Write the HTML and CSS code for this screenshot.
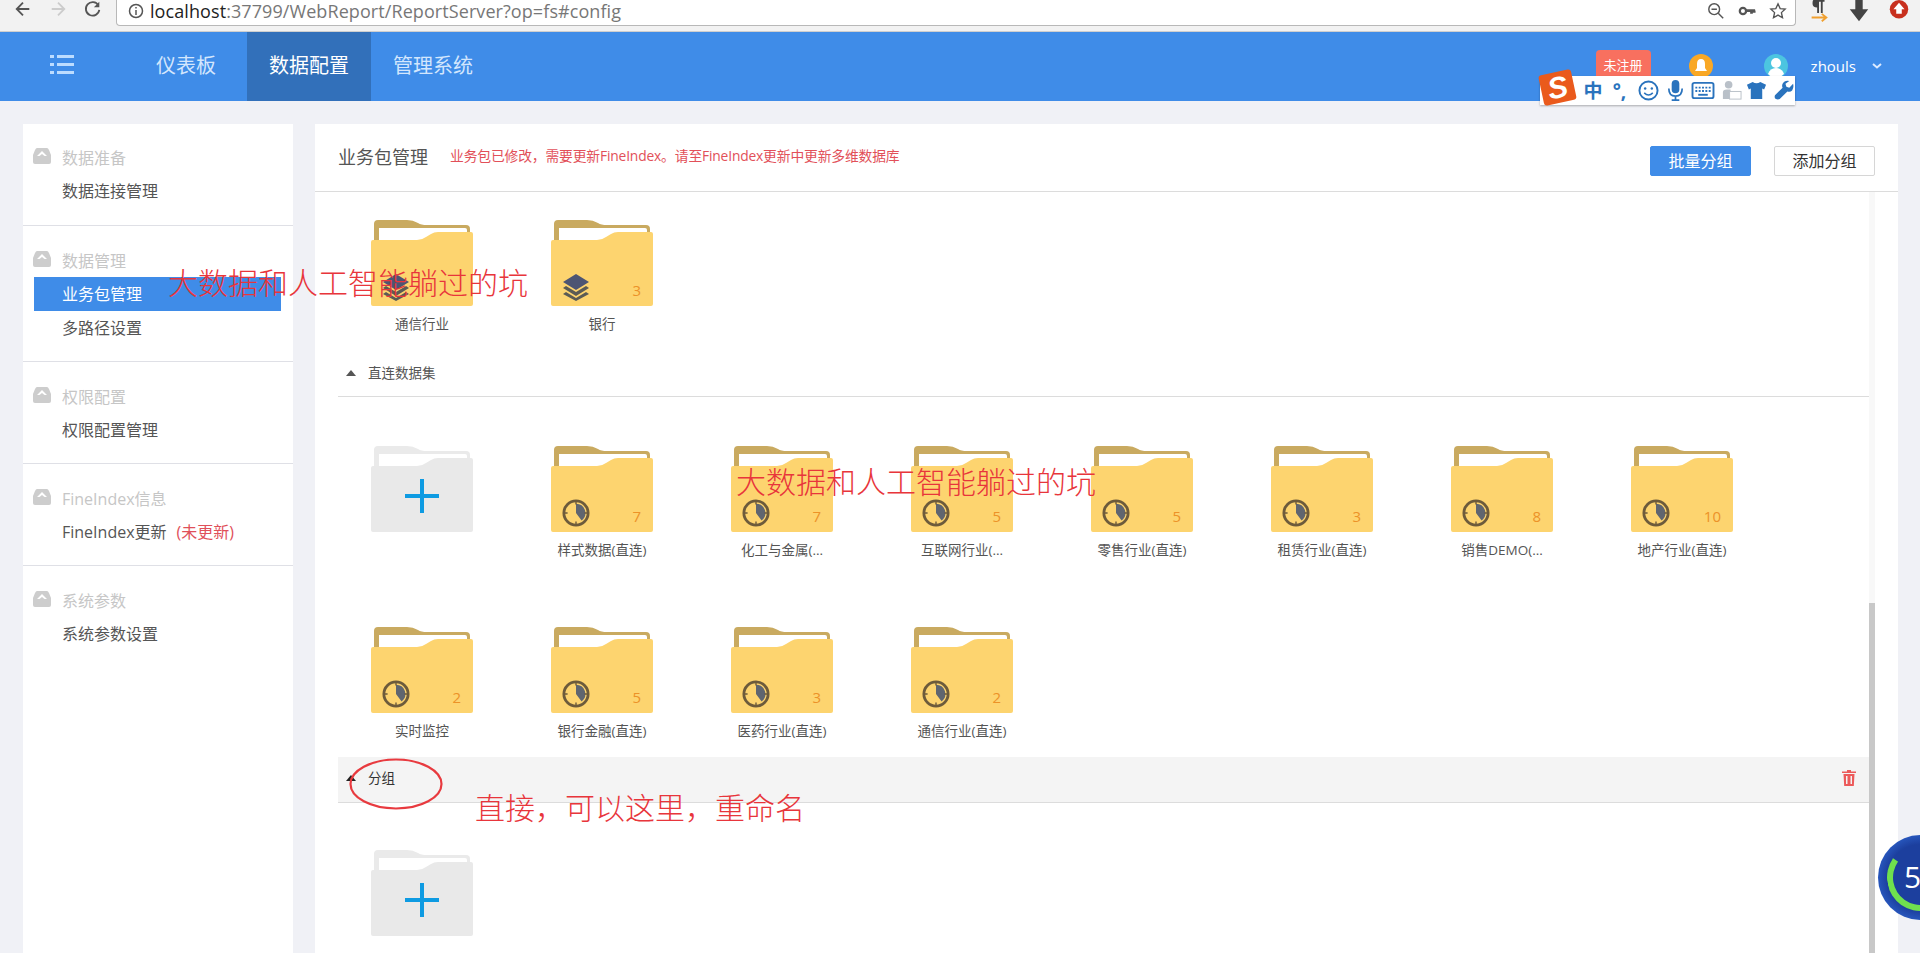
FILE: index.html
```html
<!DOCTYPE html>
<html lang="zh-CN">
<head>
<meta charset="utf-8">
<title>FineBI</title>
<link rel="stylesheet" href="styles.css">
</head>
<body>
<svg class="defs" width="0" height="0" aria-hidden="true">
  <symbol id="folder" viewBox="0 0 102 86">
    <path fill="#c9aa60" d="M3 24V4Q3 0 7 0H36Q42 0 47 3Q50 5 56 5H95Q99 5 99 9V20H3Z"/>
    <path fill="#fff" d="M8 20V8H94Q96 8 96 10V20Z"/>
    <path fill="#fdd46f" d="M2 20H46Q51 20 55 17L60 14Q63 12 67 12H100Q102 12 102 14V84Q102 86 100 86H2Q0 86 0 84V22Q0 20 2 20Z"/>
  </symbol>
  <symbol id="folder-add" viewBox="0 0 102 86">
    <path fill="#eaeaea" d="M3 24V4Q3 0 7 0H36Q42 0 47 3Q50 5 56 5H95Q99 5 99 9V20H3Z"/>
    <path fill="#fff" d="M8 20V8H94Q96 8 96 10V20Z"/>
    <path fill="#e9e9e9" d="M2 20H46Q51 20 55 17L60 14Q63 12 67 12H100Q102 12 102 14V84Q102 86 100 86H2Q0 86 0 84V22Q0 20 2 20Z"/>
    <path fill="#0e9be2" d="M49 33h4v15h15v4H53v15h-4V52H34v-4h15z"/>
  </symbol>
  <symbol id="clock" viewBox="0 0 30 30">
    <circle cx="15" cy="15" r="13" fill="none" stroke="#6d5b3b" stroke-width="3"/>
    <path fill="#5f6570" d="M15 5A10 10 0 0 1 21 23L15 15Z"/>
    <path stroke="#6d5b3b" stroke-width="1.5" d="M15 3v3M15 24v3M3 15h3M24 15h3"/>
  </symbol>
  <symbol id="layers" viewBox="0 0 28 28">
    <path fill="#4d5573" d="M14 1L27 9L14 17L1 9Z"/>
    <path fill="#5b5b55" d="M4 13L14 19L24 13L27 15L14 23L1 15ZM4 19L14 25L24 19L27 21L14 28L1 21Z"/>
  </symbol>
  <symbol id="dome" viewBox="0 0 18 16">
    <path fill="#cdcdcd" d="M4 0H14Q15 0 16 2L18 7V14Q18 16 16 16H2Q0 16 0 14V7L2 2Q3 0 4 0Z"/>
    <path fill="#fff" d="M4 8L9 3L14 8H11.500L9 6L6.500 8Z"/>
  </symbol>
</svg>

<div class="toolbar">
  <svg class="tb-icon" viewBox="0 0 20 20"><path fill="none" stroke="#555" stroke-width="2" d="M17 10H4M10 3L3 10L10 17"/></svg>
  <svg class="tb-icon tb-gap" viewBox="0 0 20 20"><path fill="none" stroke="#ccc" stroke-width="2" d="M3 10H16M10 3L17 10L10 17"/></svg>
  <svg class="tb-icon tb-gap" viewBox="0 0 20 20"><path fill="none" stroke="#555" stroke-width="2" d="M16 6A7.500 7.500 0 1 0 17 11"/><path fill="#555" d="M17 2v6h-6z"/></svg>
  <div class="urlbar">
    <svg class="url-info" viewBox="0 0 16 16"><circle cx="8" cy="8" r="6.500" fill="none" stroke="#555" stroke-width="1.500"/><path stroke="#555" stroke-width="1.500" d="M8 7v5M8 4v1.500"/></svg>
    <span class="url-text"><b>localhost</b>:37799/WebReport/ReportServer?op=fs#config</span>
    <svg class="url-act" viewBox="0 0 20 20"><circle cx="8" cy="8" r="6" fill="none" stroke="#555" stroke-width="1.600"/><path stroke="#555" stroke-width="1.600" d="M5 8h6M12.500 12.500L18 18"/></svg>
    <svg class="url-act" viewBox="0 0 20 20"><circle cx="5.500" cy="10" r="3.500" fill="none" stroke="#555" stroke-width="2.500"/><path stroke="#555" stroke-width="3" d="M9 9.500h10M15 9.500v3.500M18 9.500v2.500"/></svg>
    <svg class="url-act" viewBox="0 0 20 20"><path fill="none" stroke="#555" stroke-width="1.500" d="M10 2l2.400 5.300 5.600.6-4.200 3.900 1.200 5.700-5-2.900-5 2.900 1.200-5.700L2 7.900l5.600-.6z"/></svg>
  </div>
  <div class="extensions">
    <svg class="ext" viewBox="0 0 22 26"><path fill="#444" d="M5 0h12v2h-2v12h-2V2h-2v12H9V8Q4 8 4 4T5 0Z"/><path fill="none" stroke="#f0a030" stroke-width="2" d="M3 19h15M14 15l5 4-5 4"/></svg>
    <svg class="ext" viewBox="0 0 22 26"><path fill="#444" d="M7 0h8v10h6L11 23L1 10h6Z"/></svg>
    <svg class="ext" viewBox="0 0 22 26"><circle cx="11" cy="10" r="10" fill="#c8301e"/><path fill="#fff" d="M11 3l6 7h-3v5H8v-5H5z"/></svg>
  </div>
</div>

<header class="nav">
  <div class="nav-menu">
    <svg class="nav-list" viewBox="0 0 24 20"><path fill="#bcdcff" d="M0 0h4v3H0zM7 0h17v3H7zM0 8h4v3H0zM7 8h17v3H7zM0 16h4v3H0zM7 16h17v3H7z"/></svg>
  </div>
  <a class="nav-item nav-first">仪表板</a>
  <a class="nav-item nav-active">数据配置</a>
  <a class="nav-item">管理系统</a>
  <div class="nav-right">
    <span class="reg">未注册</span>
    <svg class="round bell" viewBox="0 0 24 24"><circle cx="12" cy="12" r="12" fill="#f9a825"/><path fill="#fff" d="M12 5Q16 5 16 10V14L18 17H6L8 14V10Q8 5 12 5Z"/></svg>
    <svg class="round avatar" viewBox="0 0 24 24"><circle cx="12" cy="12" r="12" fill="#4cc5e0"/><circle cx="12" cy="9" r="5" fill="#fff"/><path fill="#fff" d="M4 20Q6 14 12 14T20 20Q16 24 12 24T4 20Z"/></svg>
    <span class="user">zhouls</span>
    <svg class="chev" viewBox="0 0 10 6"><path fill="none" stroke="#dceaff" stroke-width="2" d="M1 1l4 3.500L9 1"/></svg>
  </div>
</header>

<div class="page">
  <aside class="side">
    <section class="group">
      <h3 class="g-title"><svg class="dome"><use href="#dome"/></svg>数据准备</h3>
      <a class="g-item">数据连接管理</a>
    </section>
    <section class="group">
      <h3 class="g-title"><svg class="dome"><use href="#dome"/></svg>数据管理</h3>
      <a class="g-item g-active">业务包管理</a>
      <a class="g-item">多路径设置</a>
    </section>
    <section class="group">
      <h3 class="g-title"><svg class="dome"><use href="#dome"/></svg>权限配置</h3>
      <a class="g-item">权限配置管理</a>
    </section>
    <section class="group">
      <h3 class="g-title"><svg class="dome"><use href="#dome"/></svg>FineIndex信息</h3>
      <a class="g-item">FineIndex更新<span class="stale">(未更新)</span></a>
    </section>
    <section class="group group-last">
      <h3 class="g-title"><svg class="dome"><use href="#dome"/></svg>系统参数</h3>
      <a class="g-item">系统参数设置</a>
    </section>
  </aside>

  <main class="panel">
    <div class="panel-head">
      <h2 class="panel-title">业务包管理</h2>
      <span class="warn">业务包已修改，需要更新FineIndex。请至FineIndex更新中更新多维数据库</span>
      <button class="btn btn-primary">批量分组</button>
      <button class="btn">添加分组</button>
    </div>
    <div class="panel-body">
      <div class="content">
        <div class="tiles tiles-top">
          <div class="tile"><svg class="folder"><use href="#folder"/></svg><svg class="kind"><use href="#layers"/></svg><span class="name">通信行业</span></div>
          <div class="tile"><svg class="folder"><use href="#folder"/></svg><svg class="kind"><use href="#layers"/></svg><span class="count">3</span><span class="name">银行</span></div>
        </div>
        <div class="sec"><i class="tri"></i>直连数据集</div>
        <div class="tiles tiles-direct">
          <div class="tile"><svg class="folder"><use href="#folder-add"/></svg></div>
          <div class="tile"><svg class="folder"><use href="#folder"/></svg><svg class="kind"><use href="#clock"/></svg><span class="count">7</span><span class="name">样式数据(直连)</span></div>
          <div class="tile"><svg class="folder"><use href="#folder"/></svg><svg class="kind"><use href="#clock"/></svg><span class="count">7</span><span class="name">化工与金属(...</span></div>
          <div class="tile"><svg class="folder"><use href="#folder"/></svg><svg class="kind"><use href="#clock"/></svg><span class="count">5</span><span class="name">互联网行业(...</span></div>
          <div class="tile"><svg class="folder"><use href="#folder"/></svg><svg class="kind"><use href="#clock"/></svg><span class="count">5</span><span class="name">零售行业(直连)</span></div>
          <div class="tile"><svg class="folder"><use href="#folder"/></svg><svg class="kind"><use href="#clock"/></svg><span class="count">3</span><span class="name">租赁行业(直连)</span></div>
          <div class="tile"><svg class="folder"><use href="#folder"/></svg><svg class="kind"><use href="#clock"/></svg><span class="count">8</span><span class="name">销售DEMO(...</span></div>
          <div class="tile"><svg class="folder"><use href="#folder"/></svg><svg class="kind"><use href="#clock"/></svg><span class="count">10</span><span class="name">地产行业(直连)</span></div>
          <div class="tile"><svg class="folder"><use href="#folder"/></svg><svg class="kind"><use href="#clock"/></svg><span class="count">2</span><span class="name">实时监控</span></div>
          <div class="tile"><svg class="folder"><use href="#folder"/></svg><svg class="kind"><use href="#clock"/></svg><span class="count">5</span><span class="name">银行金融(直连)</span></div>
          <div class="tile"><svg class="folder"><use href="#folder"/></svg><svg class="kind"><use href="#clock"/></svg><span class="count">3</span><span class="name">医药行业(直连)</span></div>
          <div class="tile"><svg class="folder"><use href="#folder"/></svg><svg class="kind"><use href="#clock"/></svg><span class="count">2</span><span class="name">通信行业(直连)</span></div>
        </div>
        <div class="sec sec-hover"><i class="tri tri-dark"></i>分组
          <svg class="trash" viewBox="0 0 14 16"><path fill="#ec5a5a" d="M5 0h4v1.500h5V3H0V1.500h5zM1.500 4h11l-.7 12H2.200zM4 6v8h1.500V6zM8.500 6v8H10V6z"/></svg>
        </div>
        <div class="tiles tiles-group">
          <div class="tile"><svg class="folder"><use href="#folder-add"/></svg></div>
        </div>
      </div>
      <div class="scroll"><div class="thumb"></div></div>
    </div>
  </main>
</div>

<div class="note note-a">大数据和人工智能躺过的坑</div>
<div class="note note-b">大数据和人工智能躺过的坑</div>
<div class="note note-c">直接，可以这里，重命名</div>
<div class="ring"></div>

<div class="ime">
  <span class="ime-logo"><span>S</span></span>
  <span class="ime-zh">中</span>
  <span class="ime-punc">°,</span>
  <svg class="ime-ic" viewBox="0 0 22 22"><circle cx="11" cy="11" r="9.500" fill="none" stroke="#2a73bd" stroke-width="2"/><circle cx="7.500" cy="9" r="1.300" fill="#2a73bd"/><circle cx="14.500" cy="9" r="1.300" fill="#2a73bd"/><path fill="none" stroke="#2a73bd" stroke-width="1.600" d="M6.500 13.500Q11 18 15.500 13.500"/></svg>
  <svg class="ime-ic" viewBox="0 0 22 22"><rect x="7" y="0" width="8" height="14" rx="4" fill="#2a73bd"/><path fill="none" stroke="#2a73bd" stroke-width="1.800" d="M4 9Q4 17 11 17T18 9M11 17v4M7 21h8"/></svg>
  <svg class="ime-ic ime-wide" viewBox="0 0 24 22"><rect x="1" y="3" width="22" height="16" rx="2" fill="none" stroke="#2a73bd" stroke-width="2"/><path stroke="#2a73bd" stroke-width="2" stroke-dasharray="2 1.500" d="M4 8h16M4 11.500h16"/><path stroke="#2a73bd" stroke-width="2" d="M7 15.500h10"/></svg>
  <svg class="ime-ic" viewBox="0 0 22 22"><circle cx="8" cy="5" r="4" fill="#b9c0c8"/><path fill="#b9c0c8" d="M2 20V13Q2 10 6 10H10V20Z"/><rect x="9" y="12" width="12" height="8" fill="#fff" stroke="#b9c0c8"/></svg>
  <svg class="ime-ic ime-shirt" viewBox="0 0 22 22"><path fill="#2a73bd" d="M7 2Q11 5 15 2L21 5L19 10L17 9V20H5V9L3 10L1 5Z"/></svg>
  <svg class="ime-ic ime-wrench" viewBox="0 0 22 22"><path fill="#2a73bd" d="M20 4L16 8L13 7L12 4L16 1Q11 0 9 4Q8 6 9 8L1 16Q0 19 2 20T6 20L14 12Q17 13 19 11Q21 8 20 4Z"/></svg>
</div>

<svg class="ellipse" viewBox="0 0 94 52"><ellipse cx="47" cy="26" rx="45.500" ry="24.500" fill="none" stroke="#e83a3f" stroke-width="2.200"/></svg>
</body>
</html>
```
FILE: styles.css
```css
* { box-sizing: border-box; }
html, body { margin: 0; height: 100%; }
body {
  width: 1920px;
  height: 953px;
  overflow: hidden;
  display: flex;
  flex-direction: column;
  position: relative;
  background: #f0f1f6;
  color: #555;
  font-family: "Open Sans", "Noto Sans CJK SC", sans-serif;
}
.defs { position: absolute; }
a { display: block; }
h2, h3 { margin: 0; font-weight: 400; }

/* browser toolbar */
.toolbar {
  flex: none;
  height: 32px;
  display: flex;
  align-items: flex-start;
  padding-left: 14px;
  background: #f2f2f2;
  border-bottom: 1px solid #cfcfcf;
}
.tb-icon { width: 18px; height: 18px; flex: none; }
.tb-gap { margin-left: 17px; }
.urlbar {
  width: 1680px;
  height: 26px;
  margin-left: 14px;
  padding: 0 8px 4px 11px;
  display: flex;
  align-items: center;
  background: #fff;
  border: 1px solid #b8b8b8;
  border-top: 0;
  border-radius: 0 0 4px 4px;
}
.url-info { width: 16px; height: 16px; flex: none; }
.url-text {
  flex: 1;
  margin-left: 6px;
  font-size: 18px;
  line-height: 20px;
  letter-spacing: .08px;
  color: #777;
}
.url-text b { font-weight: 400; color: #222; }
.url-act { width: 18px; height: 18px; margin-left: 13px; flex: none; }
.extensions { display: flex; gap: 18px; margin-left: 12px; }
.ext { width: 22px; height: 24px; }

/* top nav */
.nav {
  flex: none;
  height: 69px;
  display: flex;
  align-items: stretch;
  background: #3f8ce8;
}
.nav-menu { width: 134px; padding-left: 50px; display: flex; align-items: center; }
.nav-list { width: 24px; height: 20px; margin-top: -3px; }
.nav-item {
  padding: 0 21px 0 22px;
  line-height: 68px;
  font-size: 20px;
  color: #d3e6fd;
}
.nav-first { margin-right: 10px; }
.nav-active { padding-right: 22px; color: #fff; background: #3270ba; }
.nav-right {
  margin-left: auto;
  padding-right: 38px;
  display: flex;
  align-items: center;
  position: relative;
  top: -1px;
}
.reg {
  width: 55px;
  height: 30px;
  margin-top: -2px;
  border-radius: 4px;
  background: #f8705f;
  color: #fff;
  font-size: 13px;
  line-height: 30px;
  text-align: center;
}
.round { width: 24px; height: 24px; }
.bell { margin-left: 38px; }
.avatar { margin-left: 51px; }
.user { margin-left: 23px; font-size: 15px; color: #fff; }
.chev { width: 10px; height: 6px; margin-left: 16px; }

/* page */
.page {
  flex: 1;
  min-height: 0;
  display: flex;
  align-items: stretch;
  padding: 23px 22px 0 23px;
  gap: 22px;
}

/* sidebar */
.side { width: 270px; flex: none; background: #fff; }
.group { padding: 16px 0; border-bottom: 1px solid #dfe0e6; }
.group:first-child { padding: 15px 0 17px; }
.group-last { border-bottom: 0; }
.g-title {
  display: flex;
  align-items: center;
  height: 35px;
  padding-left: 10px;
  font-size: 16px;
  color: #c6c6c6;
}
.dome { width: 18px; height: 16px; margin-right: 11px; margin-top: -2px; }
.g-item {
  height: 34px;
  margin: 0 12px 0 11px;
  padding-left: 28px;
  font-size: 16px;
  line-height: 34px;
  color: #555;
}
.g-active { color: #fff; background: #3f8ce8; }
.stale { margin-left: 10px; color: #e0505a; }

/* main panel */
.panel { flex: 1; min-width: 0; background: #fff; display: flex; flex-direction: column; }
.panel-head {
  flex: none;
  height: 68px;
  padding: 0 23px;
  display: flex;
  align-items: center;
  border-bottom: 1px solid #dcdcdc;
}
.panel-title { margin-top: -4px; font-size: 18px; color: #555; }
.warn { margin: -6px auto 0 22px; font-size: 13.800px; color: #e25059; letter-spacing: -.16px; }
.btn {
  width: 101px;
  height: 30px;
  margin: 0 0 15px 23px;
  padding: 0;
  align-self: flex-end;
  border: 1px solid #d6d6d6;
  border-radius: 2px;
  background: #fff;
  color: #333;
  font: 400 16px/28px "Open Sans", "Noto Sans CJK SC", sans-serif;
}
.btn-primary { background: #3f8ce8; border-color: #3f8ce8; color: #fff; }

.panel-body { flex: 1; min-height: 0; display: flex; padding: 0 23px; overflow: hidden; }
.content { flex: 1; min-width: 0; }
.scroll { width: 6px; flex: none; background: #f8f8f8; display: flex; flex-direction: column; }
.thumb { flex: 1; margin-top: 411px; background: #c8c8c8; }

.tiles { display: flex; flex-wrap: wrap; padding-left: 33px; column-gap: 78px; row-gap: 66px; }
.tiles-top { padding-top: 28px; padding-bottom: 14px; }
.tiles-direct { padding-top: 49px; padding-bottom: 15px; }
.tiles-group { padding-top: 47px; }
.tile {
  position: relative;
  width: 102px;
  min-height: 115px;
  display: flex;
  flex-direction: column;
  align-items: center;
}
.folder { width: 102px; height: 86px; flex: none; }
.kind { position: absolute; left: 11px; top: 53px; width: 28px; height: 28px; }
.count { position: absolute; right: 12px; top: 60px; font-size: 15px; line-height: 20px; color: #ec9228; }
.name { margin-top: 8px; font-size: 13.500px; line-height: 20px; white-space: nowrap; color: #555; }

.sec {
  height: 48px;
  display: flex;
  align-items: center;
  font-size: 13.500px;
  line-height: 20px;
  color: #555;
  border-bottom: 1px solid #dcdcdc;
}
.tri {
  width: 0;
  height: 0;
  margin: 0 12px 0 8px;
  border: 5px solid transparent;
  border-top: 0;
  border-bottom: 6px solid #555;
}
.tri-dark { border-bottom-color: #222; }
.sec-hover { height: 46px; padding-bottom: 3px; background: #f4f4f4; color: #333; }
.trash { width: 14px; height: 16px; margin-left: auto; margin-right: 13px; }

/* overlays */
.note {
  position: absolute;
  font-size: 30px;
  line-height: 36px;
  font-weight: 300;
  color: #e8353b;
  white-space: nowrap;
}
.note-a { left: 168px; top: 265px; }
.note-b { left: 736px; top: 464px; }
.note-c { left: 475px; top: 790px; }
.ellipse { position: absolute; left: 349px; top: 758px; width: 94px; height: 52px; }

.ring {
  position: absolute;
  left: 1878px;
  top: 835px;
  width: 85px;
  height: 85px;
  border-radius: 50%;
  background: radial-gradient(circle at 50% 50%, #1c3f9e 0 55%, #2a5cc4 75%, #153089 100%);
}
.ring::before {
  content: "";
  position: absolute;
  inset: 9px;
  border-radius: 50%;
  border: 6px solid #6fe04e;
  border-top-color: transparent;
  border-right-color: transparent;
  transform: rotate(-10deg);
}
.ring::after {
  content: "5";
  position: absolute;
  left: 26px;
  top: 20px;
  font-size: 30px;
  line-height: 44px;
  color: #fff;
}

.ime {
  position: absolute;
  left: 1540px;
  top: 76px;
  width: 255px;
  height: 29px;
  padding-left: 42px;
  display: flex;
  align-items: center;
  background: #fff;
  box-shadow: 0 1px 2px rgba(0,0,0,.3);
}
.ime-logo {
  position: absolute;
  left: 1px;
  top: -4px;
  width: 33px;
  height: 31px;
  border-radius: 3px;
  background: #ea5a1c;
  color: #fff;
  font: italic 700 30px/31px "Liberation Sans", sans-serif;
  text-align: center;
  transform: rotate(-12deg);
}
.ime-zh { width: 22px; font-size: 19px; font-weight: 700; line-height: 24px; color: #2a73bd; text-align: center; }
.ime-punc { width: 25px; margin-left: 3px; font-size: 19px; font-weight: 700; line-height: 24px; color: #2a73bd; text-align: center; }
.ime-ic { width: 21px; height: 21px; margin-left: 6px; flex: none; }
.ime-wide { width: 24px; margin-left: 5px; }
.ime-shirt { margin-left: 4px; }
.ime-wrench { margin-left: 7px; }
```
